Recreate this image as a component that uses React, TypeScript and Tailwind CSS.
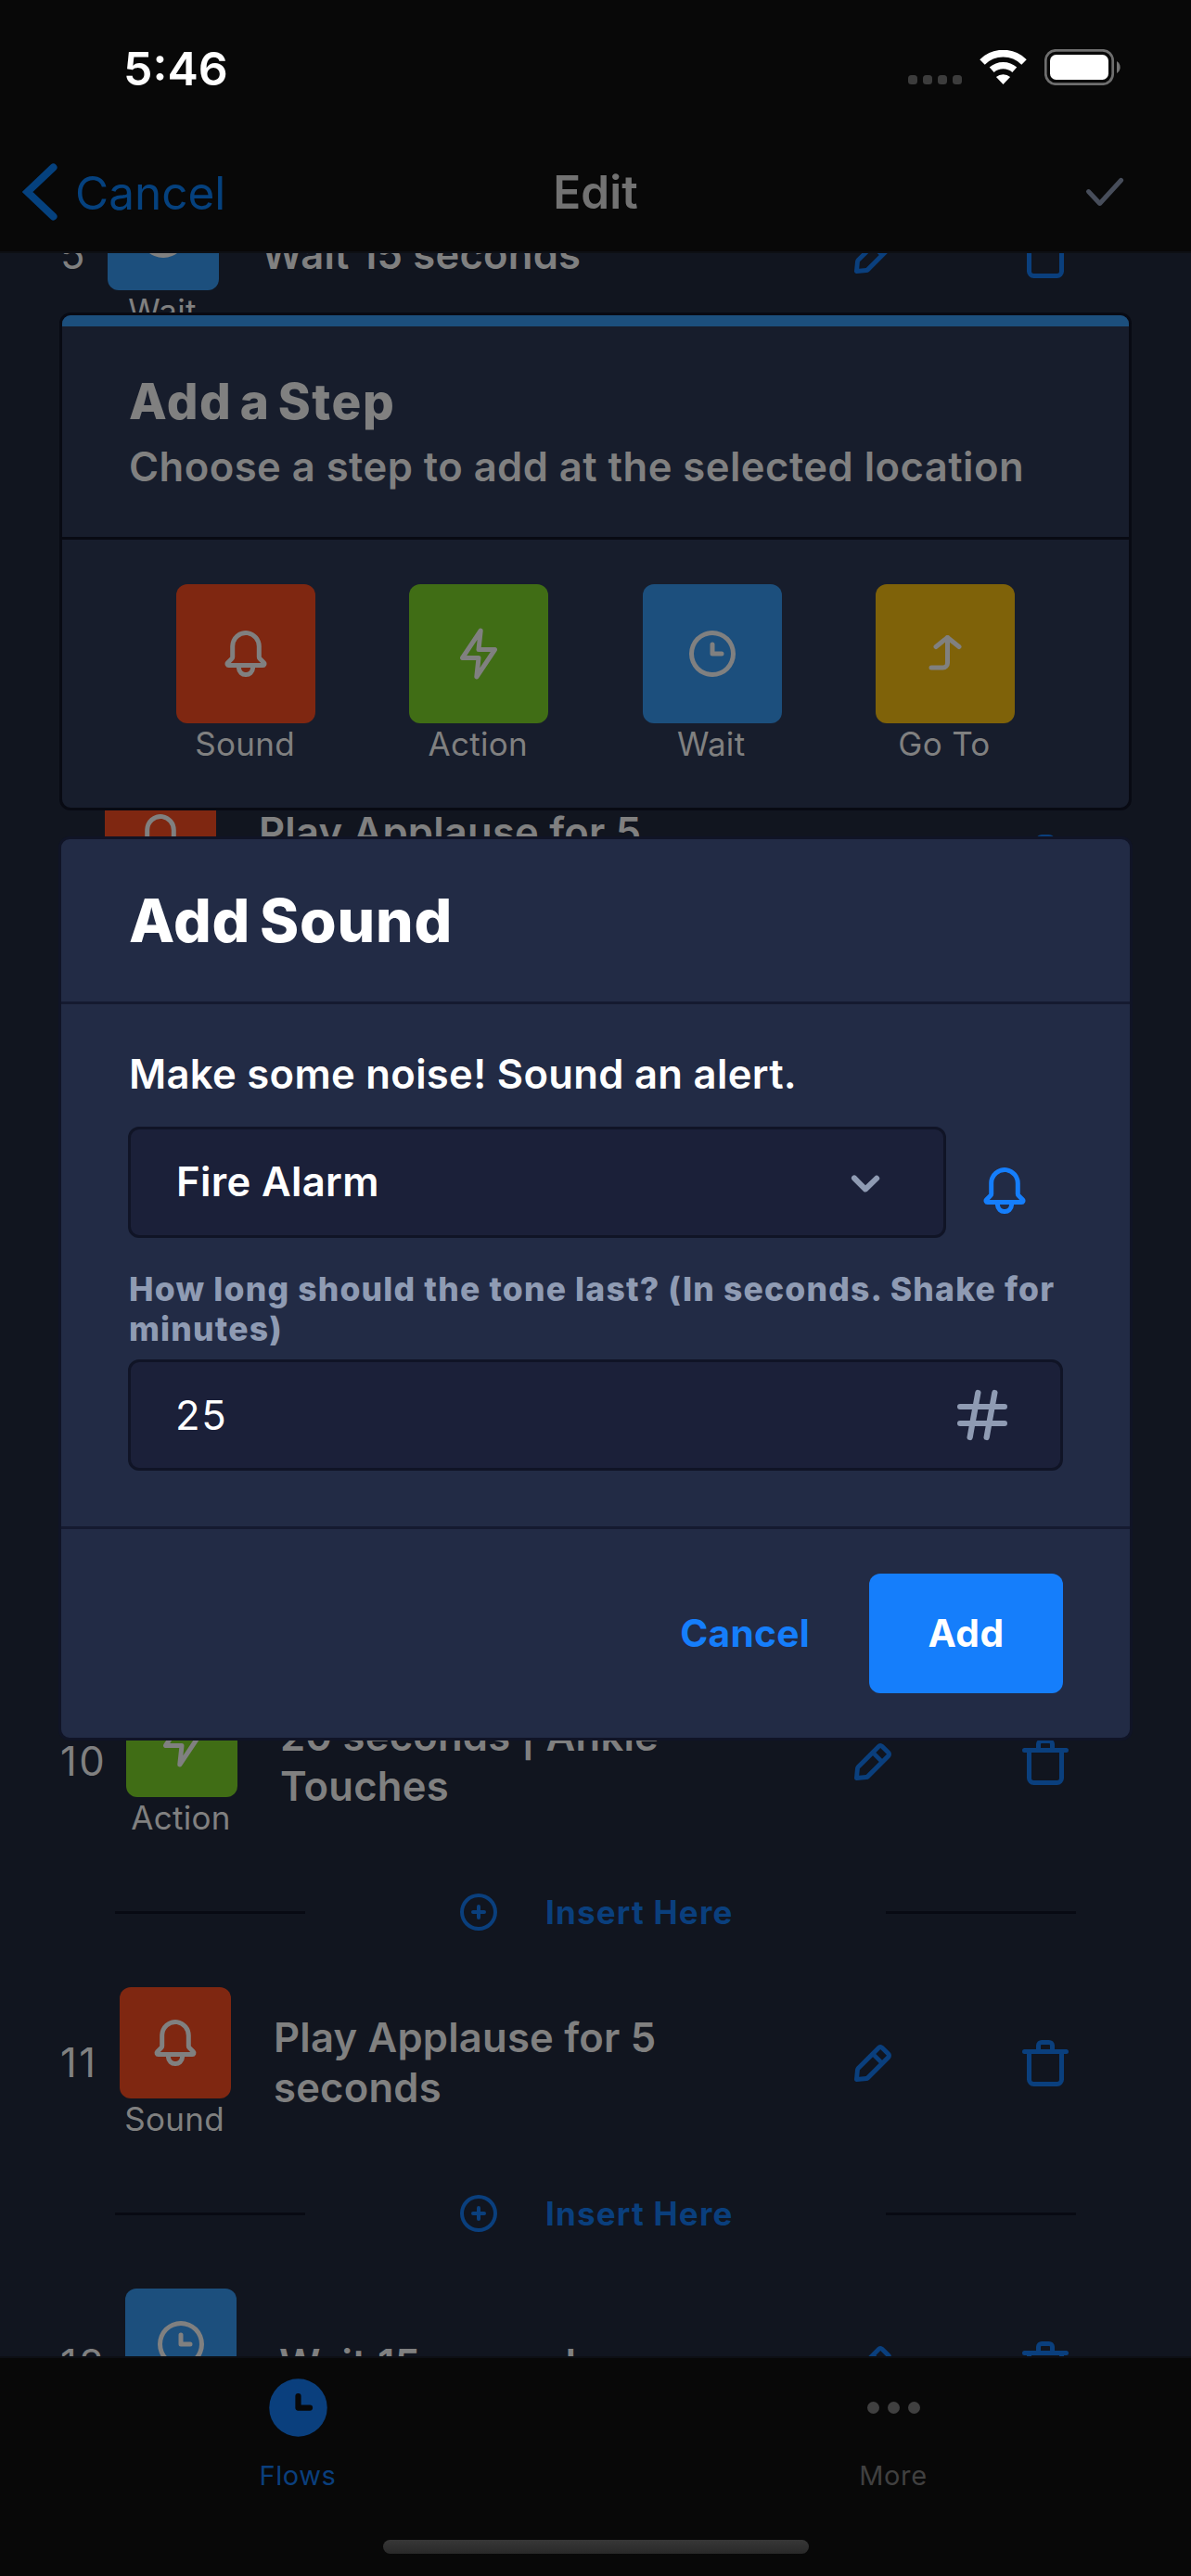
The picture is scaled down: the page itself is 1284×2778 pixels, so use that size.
import React from "react";

type IconName =
  | "bell"
  | "flash"
  | "clock"
  | "clockFill"
  | "goTo"
  | "edit"
  | "trash"
  | "plus"
  | "hash"
  | "check"
  | "chevronDown";

const icons: Record<IconName, string[]> = {
  bell: [
    "M20.52 15.21l-1.8-1.81V8.94a6.86 6.86 0 0 0-5.82-6.88 6.74 6.74 0 0 0-7.62 6.67v4.67l-1.8 1.81A1.64 1.64 0 0 0 4.64 18H8v.34A3.84 3.84 0 0 0 12 22a3.84 3.84 0 0 0 4-3.66V18h3.36a1.64 1.64 0 0 0 1.16-2.79zM14 18.34A1.88 1.88 0 0 1 12 20a1.88 1.88 0 0 1-2-1.66V18h4zM5.51 16l1.18-1.18a2 2 0 0 0 .59-1.42V8.73A4.73 4.73 0 0 1 8.9 5.17 4.67 4.67 0 0 1 12.64 4a4.86 4.86 0 0 1 4.08 4.9v4.5a2 2 0 0 0 .58 1.42L18.49 16z",
  ],
  flash: [
    "M11.11 23a1 1 0 0 1-.34-.06 1 1 0 0 1-.65-1.05l.77-7.09H5a1 1 0 0 1-.83-1.56l7.89-11.8a1 1 0 0 1 1.17-.38 1 1 0 0 1 .65 1l-.77 7.14H19a1 1 0 0 1 .83 1.56l-7.89 11.8a1 1 0 0 1-.83.44zM6.87 12.8H12a1 1 0 0 1 .74.33 1 1 0 0 1 .25.78l-.45 4.15 4.59-6.86H12a1 1 0 0 1-1-1.11l.45-4.15z",
  ],
  clock: [
    "M12 2a10 10 0 1 0 10 10A10 10 0 0 0 12 2zm0 18a8 8 0 1 1 8-8 8 8 0 0 1-8 8z",
    "M16 11h-3V8a1 1 0 0 0-2 0v4a1 1 0 0 0 1 1h4a1 1 0 0 0 0-2z",
  ],
  clockFill: [
    "M12 2a10 10 0 1 0 10 10A10 10 0 0 0 12 2zm4 11h-4a1 1 0 0 1-1-1V8a1 1 0 0 1 2 0v3h3a1 1 0 0 1 0 2z",
  ],
  goTo: [
    "M18.71 8.29l-5-4.9a1 1 0 0 0-1.42 0l-5 4.9a1 1 0 0 0 1.42 1.42L12 7.41V16a1 1 0 0 1-1 1H6a1 1 0 0 0 0 2h5a3 3 0 0 0 3-3V7.41l3.29 2.3a1 1 0 0 0 1.42 0 1 1 0 0 0 0-1.42z",
  ],
  edit: [
    "M19.4 7.34L16.66 4.6A2 2 0 0 0 14 4.53l-9 9a2 2 0 0 0-.57 1.21L4 18.91a1 1 0 0 0 .29.8A1 1 0 0 0 5 20h.09l4.17-.38a2 2 0 0 0 1.21-.57l9-9a1.92 1.92 0 0 0-.07-2.71zM9.08 17.62l-3 .28.27-3L12 9.32l2.7 2.7zM16 10.68L13.32 8l1.95-2L18 8.73z",
  ],
  trash: [
    "M21 6h-5V4.33A2.42 2.42 0 0 0 13.5 2h-3A2.42 2.42 0 0 0 8 4.33V6H3a1 1 0 0 0 0 2h1v11a3 3 0 0 0 3 3h10a3 3 0 0 0 3-3V8h1a1 1 0 0 0 0-2zM10 4.33c0-.16.21-.33.5-.33h3c.29 0 .5.17.5.33V6h-4zM18 19a1 1 0 0 1-1 1H7a1 1 0 0 1-1-1V8h12z",
  ],
  plus: [
    "M12 2a10 10 0 1 0 10 10A10 10 0 0 0 12 2zm0 18a8 8 0 1 1 8-8 8 8 0 0 1-8 8z",
    "M15 11h-2V9a1 1 0 0 0-2 0v2H9a1 1 0 0 0 0 2h2v2a1 1 0 0 0 2 0v-2h2a1 1 0 0 0 0-2z",
  ],
  hash: [
    "M20 14h-4.3l.73-4H20a1 1 0 0 0 0-2h-3.21l.69-3.81A1 1 0 0 0 16.64 3a1 1 0 0 0-1.22.82L14.67 8h-3.88l.69-3.81A1 1 0 0 0 10.64 3a1 1 0 0 0-1.22.82L8.67 8H4a1 1 0 0 0 0 2h4.3l-.73 4H4a1 1 0 0 0 0 2h3.21l-.69 3.81A1 1 0 0 0 7.36 21a1 1 0 0 0 1.22-.82L9.33 16h3.88l-.69 3.81a1 1 0 0 0 .84 1.19 1 1 0 0 0 1.22-.82l.75-4.18H20a1 1 0 0 0 0-2zM9.7 14l.73-4h3.87l-.73 4z",
  ],
  check: [
    "M9.86 18a1 1 0 0 1-.73-.32l-4.86-5.17a1 1 0 1 1 1.46-1.37l4.12 4.39 8.41-9.2a1 1 0 1 1 1.48 1.34l-9.14 10a1 1 0 0 1-.73.33z",
  ],
  chevronDown: [
    "M12 15.5a1 1 0 0 1-.71-.29l-4-4a1 1 0 1 1 1.42-1.42L12 13.1l3.3-3.18a1 1 0 1 1 1.38 1.44l-4 3.86a1 1 0 0 1-.68.28z",
  ],
};

function Icon({ name, className }: { name: IconName; className: string }) {
  return (
    <svg viewBox="0 0 24 24" fill="currentColor" className={`shrink-0 ${className}`}>
      {icons[name].map((d) => (
        <path key={d} d={d} />
      ))}
    </svg>
  );
}

/** Bent arrow with a 45° head, used for the "Go To" step. */
function GoToIcon() {
  return (
    <svg
      viewBox="0 0 24 24"
      fill="none"
      stroke="currentColor"
      strokeWidth="2"
      strokeLinecap="round"
      strokeLinejoin="round"
      className="size-[60px] shrink-0"
    >
      <path d="M6 18h5a2 2 0 0 0 2-2V5" />
      <path d="M8 9l5-4 5 4" />
    </svg>
  );
}

type StepKind = "sound" | "action" | "wait" | "goTo";

const kinds: Record<StepKind, { label: string; icon: IconName; bg: string }> = {
  sound: { label: "Sound", icon: "bell", bg: "bg-[#7f2711]" },
  action: { label: "Action", icon: "flash", bg: "bg-[#406d15]" },
  wait: { label: "Wait", icon: "clock", bg: "bg-[#1c4f7d]" },
  goTo: { label: "Go To", icon: "goTo", bg: "bg-[#7f6209]" },
};

function StepTile({ kind, size }: { kind: StepKind; size: string }) {
  const { label, icon, bg } = kinds[kind];
  return (
    <div className="flex shrink-0 flex-col items-center">
      <div className={`flex items-center justify-center rounded-[12px] ${size} ${bg}`}>
        {kind === "goTo" ? <GoToIcon /> : <Icon name={icon} className="size-[60px]" />}
      </div>
      <span className="mr-[2px] text-[35px] leading-[45px] tracking-[0.3px] whitespace-nowrap">{label}</span>
    </div>
  );
}

interface Step {
  n: number;
  numWidth: string;
  kind: StepKind;
  text: string;
}

/* null marks a slot that is fully covered by a panel. */
const steps: (Step | null)[] = [
  { n: 5, numWidth: "w-[52px]", kind: "wait", text: "Wait 15 seconds" },
  null,
  { n: 7, numWidth: "w-[49px]", kind: "sound", text: "Play Applause for 5 seconds" },
  null,
  null,
  { n: 10, numWidth: "w-[72px]", kind: "action", text: "20 seconds | Ankle Touches" },
  { n: 11, numWidth: "w-[65px]", kind: "sound", text: "Play Applause for 5 seconds" },
  { n: 12, numWidth: "w-[71px]", kind: "wait", text: "Wait 15 seconds" },
];

function InsertHere() {
  return (
    <div className="flex h-[162px] items-center pr-[124px] pl-[124px] text-[#0a3f7d]">
      <div className="h-[3px] w-[205px] bg-[#080a13]" />
      <Icon name="plus" className="ml-[163px] size-[48px]" />
      <span className="ml-[48px] text-[35px] leading-[45px] font-bold tracking-[1.2px]">Insert Here</span>
      <div className="ml-auto h-[3px] w-[205px] bg-[#080a13]" />
    </div>
  );
}

function StepRow({ step }: { step: Step }) {
  const behindPanel = step.n === 5 || step.n === 7;
  return (
    <div className="flex h-[325px] flex-col">
      <div className="flex h-[163px] items-center pr-[127px] pl-[64px]">
        <span className={`shrink-0 pl-px text-[43.6px] leading-[54px] tracking-[2.4px] ${step.numWidth}`}>
          {step.n}
        </span>
        <div className="h-[163px]">
          <StepTile kind={step.kind} size="size-[120px]" />
        </div>
        <div className="ml-[46px] w-[440px] text-[43.6px] leading-[54px] font-semibold tracking-[0.2px]">
          {step.text}
        </div>
        <div className="ml-auto flex items-center gap-[126px] text-[#0a3f7d]">
          <Icon name="edit" className="size-[60px]" />
          <Icon name="trash" className="size-[60px]" />
        </div>
      </div>
      {!behindPanel && <InsertHere />}
    </div>
  );
}

function StatusBar() {
  return (
    <div className="flex h-[145px] items-center justify-between pr-[76px] pl-[133px] text-white">
      <span className="mt-[2px] text-[50px] leading-none font-semibold">5:46</span>
      <div className="flex h-[39px] items-center">
        <div className="mt-[27px] flex gap-[6px]">
          {[0, 1, 2, 3].map((i) => (
            <div key={i} className="size-[10px] rounded-[3.5px] bg-[#3c3c3c]" />
          ))}
        </div>
        <svg viewBox="0 0 51 37" fill="none" className="ml-[19px] h-[37px] w-[51px]">
          <path d="M25.5 37l-7.6-7.9a11.5 11.5 0 0 1 15.2 0z" fill="#fff" />
          <path d="M13.2 21.3a18.5 18.5 0 0 1 24.6 0" stroke="#fff" strokeWidth="7.4" />
          <path d="M3 12.9a32 32 0 0 1 45 0" stroke="#fff" strokeWidth="7.8" />
        </svg>
        <svg viewBox="0 0 82 39" fill="none" className="ml-[19px] h-[39px] w-[82px]">
          <rect x="1.3" y="1.3" width="72.4" height="36.4" rx="11" stroke="#6e6e6e" strokeWidth="2.7" />
          <rect x="6" y="6" width="63" height="27" rx="6.5" fill="#fff" />
          <path d="M78 13a7.6 7.6 0 0 1 0 13z" fill="#747474" />
        </svg>
      </div>
    </div>
  );
}

function Header() {
  return (
    <div className="relative shrink-0 border-b-2 border-[#0d0f14] bg-[#080808]">
      <StatusBar />
      <div className="grid h-[126px] grid-cols-3 items-center pb-[2px]">
        <div className="flex items-center pl-[24px] text-[#05417e]">
          <svg viewBox="0 0 38 62" fill="none" className="h-[62px] w-[38px]">
            <path d="M33.5 4.5L5.5 31l28 26.5" stroke="currentColor" strokeWidth="8" strokeLinecap="round" strokeLinejoin="miter" />
          </svg>
          <span className="mt-px ml-[19px] text-[49.5px] leading-[60px]">Cancel</span>
        </div>
        <span className="text-center text-[49.5px] leading-[60px] font-semibold text-[#727272]">Edit</span>
        <div className="flex justify-end pr-[63px] text-[#474d5a]">
          <Icon name="check" className="size-[60px]" />
        </div>
      </div>
    </div>
  );
}

function StepPicker() {
  return (
    <div className="absolute top-[337px] left-[64px] w-[1156px] overflow-hidden rounded-[12px] border-[3px] border-[#080a13] bg-[#171d2c]">
      <div className="h-[12px] bg-[#1c4f7d]" />
      <div className="border-b-[3px] border-[#080a13] pt-[45px] pb-[48px] pl-[72px]">
        <div className="text-[53px] leading-[72px] font-extrabold tracking-[1.6px] [word-spacing:-5px]">
          Add a Step
        </div>
        <div className="mt-[8px] text-[43.6px] leading-[54px] font-semibold tracking-[0.45px] whitespace-nowrap">
          Choose a step to add at the selected location
        </div>
      </div>
      <div className="flex justify-between px-[123px] pt-[48px] pb-[46px]">
        <StepTile kind="sound" size="size-[150px]" />
        <StepTile kind="action" size="size-[150px]" />
        <StepTile kind="wait" size="size-[150px]" />
        <StepTile kind="goTo" size="size-[150px]" />
      </div>
    </div>
  );
}

function AddSoundDialog() {
  return (
    <div className="absolute top-[902px] left-[63px] w-[1158px] rounded-[12px] border-[3px] border-[#101426] bg-[#222b45] text-white">
      <div className="flex h-[178px] items-center border-b-[3px] border-[#151a30] pl-[73px]">
        <span className="text-[64px] leading-[78px] font-extrabold tracking-[0.8px] [word-spacing:-5px]">
          Add Sound
        </span>
      </div>
      <div className="border-b-[3px] border-[#151a30] px-[72px] pt-[49px] pb-[60px]">
        <div className="ml-px text-[43.6px] leading-[54px] font-semibold tracking-[0.3px]">
          Make some noise! Sound an alert.
        </div>
        <div className="mt-[29px] flex">
          <div className="flex h-[120px] w-[882px] items-center justify-between rounded-[12px] border-[3px] border-[#101426] bg-[#1b2039] px-[48px]">
            <span className="ml-px text-[43.6px] leading-[54px] font-semibold tracking-[0.35px]">Fire Alarm</span>
            <Icon name="chevronDown" className="size-[72px] text-[#8f9bb3]" />
          </div>
          <Icon name="bell" className="mt-[39px] ml-[33px] size-[60px] text-[#157efb]" />
        </div>
        <div className="mt-[34px] ml-px text-[35.5px] leading-[43px] font-extrabold tracking-[1.18px] text-[#8f9bb3]">
          How long should the tone last? (In seconds. Shake for
          <br />
          minutes)
        </div>
        <div className="mt-[11px] flex h-[120px] items-center justify-between rounded-[12px] border-[3px] border-[#101426] bg-[#1b2039] pr-[48px] pl-[48px]">
          <span className="mt-[2px] text-[43.6px] leading-[54px] tracking-[1.6px]">25</span>
          <Icon name="hash" className="size-[72px] text-[#8f9bb3]" />
        </div>
      </div>
      <div className="flex items-center justify-end px-[72px] py-[48px] text-[40.7px] leading-[50px] font-bold">
        <span className="mt-px mr-[64px] tracking-[0.27px] text-[#157efb]">Cancel</span>
        <div className="flex h-[129px] w-[209px] items-center justify-center rounded-[12px] bg-[#157efb] tracking-[0.45px]">
          Add
        </div>
      </div>
    </div>
  );
}

function TabBar() {
  return (
    <div className="relative flex h-[237px] shrink-0 flex-col items-center border-t-2 border-[#0d0f14] bg-[#080808]">
      <div className="grid w-full grid-cols-2 pt-[16px] text-[29px] leading-[36px] tracking-[0.6px]">
        <div className="flex flex-col items-center text-[#0a3f7d]">
          <Icon name="clockFill" className="size-[75px]" />
          <span className="mt-[18px]">Flows</span>
        </div>
        <div className="flex flex-col items-center text-[#404040]">
          <div className="flex h-[75px] items-center gap-[9px]">
            <div className="size-[13px] rounded-full bg-current" />
            <div className="size-[13px] rounded-full bg-current" />
            <div className="size-[13px] rounded-full bg-current" />
          </div>
          <span className="mt-[18px]">More</span>
        </div>
      </div>
      <div className="mt-[51px] h-[15px] w-[459px] rounded-full bg-gradient-to-b from-[#373737] to-[#292929]" />
    </div>
  );
}

export default function App() {
  return (
    <div className="relative flex h-[2778px] w-[1284px] flex-col overflow-hidden bg-[#11151f] font-['Inter',sans-serif] text-[#808080]">
      <Header />
      <div className="h-[2268px] overflow-hidden">
        <div className="-mt-[80px]">
          {steps.map((s, i) => (s ? <StepRow key={i} step={s} /> : <div key={i} className="h-[325px]" />))}
        </div>
      </div>
      <TabBar />
      <StepPicker />
      <AddSoundDialog />
    </div>
  );
}
